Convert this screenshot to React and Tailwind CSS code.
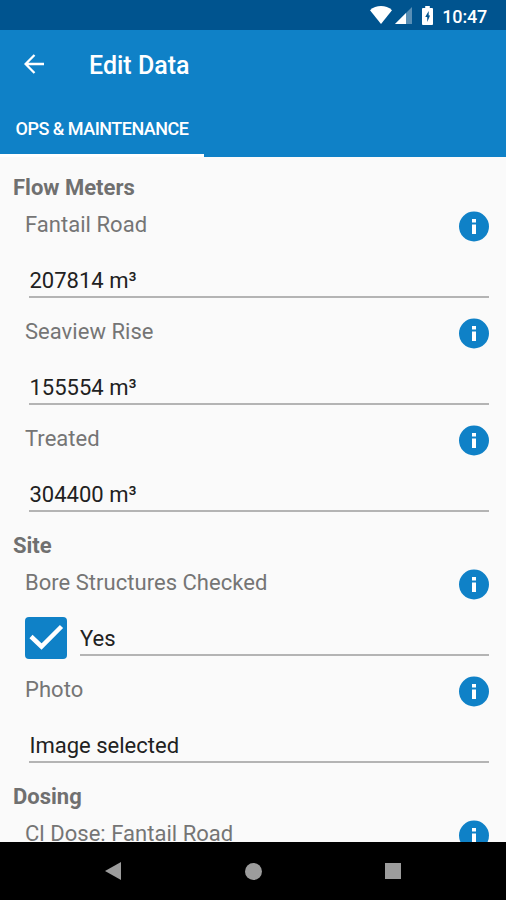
import { useState } from "react";

const sections = [
  {
    title: "Flow Meters",
    fields: [
      { label: "Fantail Road", value: "207814 m³" },
      { label: "Seaview Rise", value: "155554 m³" },
      { label: "Treated", value: "304400 m³" },
    ],
  },
  {
    title: "Site",
    fields: [
      { label: "Bore Structures Checked", value: "Yes", checkbox: true },
      { label: "Photo", value: "Image selected" },
    ],
  },
  {
    title: "Dosing",
    fields: [{ label: "Cl Dose: Fantail Road", value: "" }],
  },
];

const StatusBar = () => (
  <div className="flex h-[30px] shrink-0 items-center justify-end bg-[#00548f] text-white">
    <svg width="22" height="18" viewBox="0 0 22 18" fill="currentColor">
      <path d="M0 4.2C3 1.2 7 0 11 0s8 1.2 11 4.2L11 18z" />
    </svg>
    <svg className="mt-px ml-[3px]" width="17" height="17" viewBox="0 0 17 17" fill="currentColor">
      <path d="M0 17 17 0v17z" opacity="0.35" />
      <path d="M0 17 11 6v11z" />
    </svg>
    <svg className="ml-[10px]" width="11" height="19" viewBox="0 0 12 19" preserveAspectRatio="none">
      <path d="M3.500 0h5v2H11q1 0 1 1v15q0 1-1 1H1q-1 0-1-1V3q0-1 1-1h2.500z" fill="white" />
      <path d="M7.300 5 3.500 11h2.200v5L8.800 9.500H7.300z" fill="#00548f" />
    </svg>
    <span className="mr-[19px] ml-[9px] pt-[3px] text-[18px] leading-none font-medium tracking-[-0.2px]">10:47</span>
  </div>
);

const InfoIcon = () => (
  <svg width="30" height="31" viewBox="0 0 30 31">
    <circle cx="15" cy="15.500" r="15" fill="#0f81c7" />
    <path d="M13 8h4v3.500h-4zM13 13.500h4V23h-4z" fill="white" />
  </svg>
);

const Field = ({ label, value, checkbox }) => {
  const [checked, setChecked] = useState(true);

  return (
    <div className="h-[107px] pr-[17px] pl-[25px]">
      <div className="flex h-9 justify-between">
        <span className="text-[22px] leading-[38px] tracking-[0.03px] text-[#757575]">{label}</span>
        <span className="pt-[5px]">
          <InfoIcon />
        </span>
      </div>
      <div className="flex h-[55px] items-end">
        {checkbox && (
          <button
            onClick={() => setChecked(!checked)}
            className="mr-[13px] mb-[-4px] h-[42px] w-[42px] shrink-0 rounded-[4px] bg-[#0f81c7]"
          >
            {checked && (
              <svg width="42" height="42" viewBox="0 0 42 42" fill="none" stroke="white" strokeWidth="4.500">
                <path d="M6 19.500 16.500 29.500 36.500 9.500" />
              </svg>
            )}
          </button>
        )}
        <div
          className={
            checkbox
              ? "mb-[-1px] h-[37px] grow border-b-2 border-[#b4b4b4] text-[22px] leading-[39px] text-[#212121]"
              : "mb-[-1px] ml-1 h-[37px] grow border-b-2 border-[#b4b4b4] pl-[0.500px] text-[22px] leading-[39px] text-[#212121]"
          }
        >
          {value}
        </div>
      </div>
    </div>
  );
};

const App = () => {
  return (
    <div className="flex h-[900px] w-[506px] flex-col overflow-hidden bg-[#fafafa] font-[Roboto,sans-serif]">
      <StatusBar />

      <header className="h-[127px] shrink-0 bg-[#0f81c7] text-white">
        <div className="flex h-[70px] items-center pl-[24px]">
          <svg className="mb-[2px]" width="20" height="20" viewBox="0 0 20 20" fill="none" stroke="white" strokeWidth="2.300">
            <path d="M20 10H2M10.500 1 1.600 10l8.900 9" />
          </svg>
          <h1 className="ml-[45px] pt-[2px] text-[25px] font-medium">Edit Data</h1>
        </div>
        <div className="flex h-[57px] w-[204px] items-center justify-center border-b-3 border-white pt-[3px] text-[18px] font-medium tracking-[-0.5px]">
          OPS &amp; MAINTENANCE
        </div>
      </header>

      <main className="min-h-0 grow overflow-hidden pt-3">
        {sections.map((section) => (
          <section key={section.title}>
            <h2 className="h-[37px] pl-[13px] text-[22px] leading-[37px] font-bold text-[#707070]">
              {section.title}
            </h2>
            {section.fields.map((field) => (
              <Field key={field.label} {...field} />
            ))}
          </section>
        ))}
      </main>

      <nav className="flex h-[58px] shrink-0 items-center bg-black pl-[105px] text-[#9c9c9c]">
        <svg width="16" height="18" viewBox="0 0 16 18" fill="currentColor">
          <path d="M16 0v18L0 9z" />
        </svg>
        <span className="ml-[124px] h-[17px] w-[17px] rounded-full bg-[#9c9c9c]" />
        <span className="ml-[123px] h-4 w-4 bg-[#9c9c9c]" />
      </nav>
    </div>
  );
};

export default App;
